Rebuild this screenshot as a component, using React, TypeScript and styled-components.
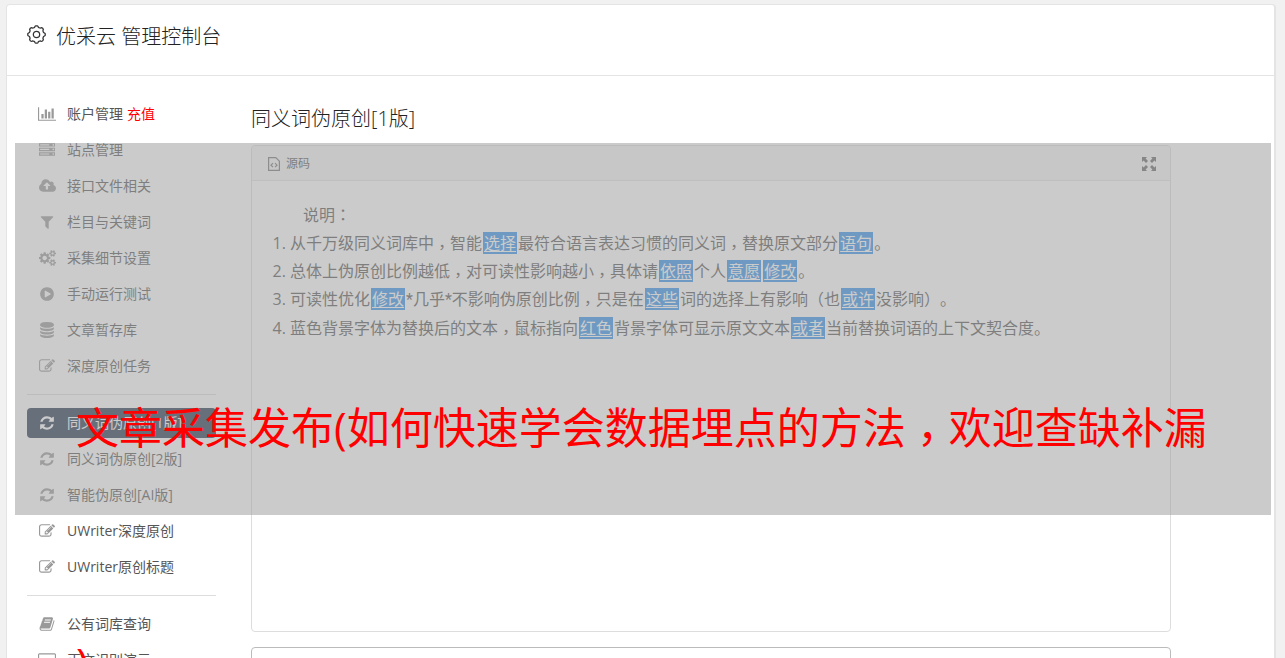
import React from 'react';
import styled, { createGlobalStyle } from 'styled-components';

const Global = createGlobalStyle`
  * { box-sizing: border-box; }
  html, body, #root { height: 100%; }
  body {
    margin: 0;
    overflow: hidden;
    background: #f1f1f1;
    color: #222;
    font-family: "Open Sans", "Noto Sans CJK SC", sans-serif;
    font-size: 14px;
    font-weight: 400;
    text-spacing-trim: space-all;
  }
`;

const Page = styled.div`
  position: relative;
  height: 100%;
  overflow: hidden;
  padding: 4px 9px 0 6px;
`;

const Shell = styled.div`
  min-height: 100%;
  background: #fff;
  border: 1px solid #e4e4e4;
  border-right-width: 2px;
  border-radius: 4px 4px 0 0;
`;

const Header = styled.header`
  display: flex;
  align-items: center;
  gap: 10px;
  height: 71px;
  padding: 0 20px 12px;
  border-bottom: 1px solid #e4e4e4;
`;

const Brand = styled.h1`
  margin: 0;
  padding-top: 5px;
  font-size: 20px;
  line-height: 28px;
  font-weight: 300;
`;

const Columns = styled.div`
  display: flex;
  align-items: flex-start;
  gap: 35px;
  padding: 23px 103px 0 20px;
`;

const Side = styled.nav`
  flex: 0 0 189px;
`;

const MenuList = styled.ul`
  display: flex;
  flex-direction: column;
  gap: 6px;
  list-style: none;
  margin: 0;
  padding: 0;
`;

const Divider = styled.hr`
  width: 100%;
  height: 1px;
  margin: 13px 0;
  border: 0;
  background: #ddd;
`;

const MenuLink = styled.a<{ $active?: boolean }>`
  display: flex;
  align-items: center;
  gap: 10px;
  height: 30px;
  padding: 0 10px;
  border-radius: 4px;
  white-space: nowrap;
  text-decoration: none;
  color: ${p => (p.$active ? '#fff' : '#555')};
  background: ${p => (p.$active ? '#23344f' : 'transparent')};
  svg { color: ${p => (p.$active ? '#fff' : '#999')}; }
`;

const IconSlot = styled.span`
  display: flex;
  justify-content: center;
  flex: 0 0 20px;
`;

const MenuLabel = styled.span`
  padding-bottom: 2px;
`;

const Recharge = styled.span`
  margin-left: 4px;
  color: #f00;
`;

const Main = styled.main`
  flex: 1;
  min-width: 0;
`;

const Title = styled.h2`
  margin: 6px 0 12px;
  font-size: 20px;
  line-height: 28px;
  font-weight: 300;
`;

const Panel = styled.section`
  height: 487px;
  border: 1px solid #ddd;
  border-radius: 4px;
  overflow: hidden;
`;

const Toolbar = styled.div`
  display: flex;
  align-items: center;
  justify-content: space-between;
  height: 35px;
  padding: 2px 14px 0 16px;
  background: #f5f5f5;
  border-bottom: 1px solid #e4e4e4;
`;

const ToolButton = styled.button`
  display: flex;
  align-items: center;
  gap: 6px;
  padding: 0;
  border: 0;
  background: none;
  color: #555;
  font-family: inherit;
  font-size: 12px;
  line-height: 16px;
`;

const Article = styled.div`
  padding: 20px 19px;
  font-size: 16px;
  line-height: 28px;
  color: #555;
  white-space: nowrap;
`;

const Lead = styled.p`
  margin: 0;
  padding-left: 32px;
`;

const Rules = styled.ol`
  margin: 0;
  padding-left: 19px;
`;

const Swap = styled.a`
  margin: 0 1px;
  padding: 0 1px;
  color: #fff;
  background: #3291eb;
  text-decoration: underline;
  text-underline-offset: 2px;
`;

/* Full-width punctuation centred in its cell; commas drop to the baseline */
const Mark = styled.span<{ $low?: boolean }>`
  font-family: "Noto Sans CJK TC", sans-serif;
  line-height: 0;
  vertical-align: ${p => (p.$low ? '-0.25em' : 'baseline')};
`;

const Star = styled.span`
  font-family: Roboto, sans-serif;
`;

const NextPanel = styled.section`
  height: 60px;
  margin-top: 15px;
  border: 1px solid #bbb;
  border-radius: 4px;
`;

const Veil = styled.div`
  position: absolute;
  top: 143px;
  left: 15px;
  right: 14px;
  height: 372px;
  background: rgba(160, 160, 160, 0.55);
`;

const Caption = styled.p`
  position: absolute;
  top: 310px;
  left: 76px;
  right: 70px;
  margin: 0;
  font-size: 43px;
  line-height: 236px;
  color: #f00;
  line-break: anywhere;
`;

type Glyph = { w: number; d: string };

const glyphs: Record<string, Glyph> = {
  chart: { w: 2048, d: 'M640 896v512h-256v-512h256zm384-512v1024h-256v-1024h256zm1024 1152v128h-2048v-1536h128v1408h1920zm-640-896v768h-256v-768h256zm384-384v1152h-256v-1152h256z' },
  server: { w: 1792, d: 'M128 1408h1024v-128h-1024v128zm0-512h1024v-128h-1024v128zm1568 448q0-40-28-68t-68-28-68 28-28 68 28 68 68 28 68-28 28-68zm-1568-960h1024v-128h-1024v128zm1568 448q0-40-28-68t-68-28-68 28-28 68 28 68 68 28 68-28 28-68zm0-512q0-40-28-68t-68-28-68 28-28 68 28 68 68 28 68-28 28-68zm96 832v384h-1792v-384h1792zm0-512v384h-1792v-384h1792zm0-512v384h-1792v-384h1792z' },
  cloud: { w: 1920, d: 'M1280 864q0-14-9-23l-352-352q-9-9-23-9t-23 9l-351 351q-10 12-10 24 0 14 9 23t23 9h224v352q0 13 9.5 22.5t22.5 9.5h192q13 0 22.5-9.5t9.5-22.5v-352h224q13 0 22.5-9.5t9.5-22.5zm640 288q0 159-112.5 271.5t-271.5 112.5h-1088q-185 0-316.5-131.5t-131.5-316.5q0-130 70-240t188-165q-2-30-2-43 0-212 150-362t362-150q156 0 285.5 87t188.5 231q71-62 166-62 106 0 181 75t75 181q0 76-41 138 130 31 213.5 135.5t83.5 238.5z' },
  filter: { w: 1792, d: 'M1595 295q17 41-14 70l-493 493v742q0 42-39 59-13 5-25 5-27 0-45-19l-256-256q-19-19-19-45v-486l-493-493q-31-29-14-70 17-39 59-39h1280q42 0 59 39z' },
  cogs: { w: 1920, d: 'M896 896q0-106-75-181t-181-75-181 75-75 181 75 181 181 75 181-75 75-181zm768 512q0-52-38-90t-90-38-90 38-38 90q0 53 37.5 90.5t90.5 37.5 90.5-37.5 37.5-90.5zm0-1024q0-52-38-90t-90-38-90 38-38 90q0 53 37.5 90.5t90.5 37.5 90.5-37.5 37.5-90.5zm-384 421v185q0 10-7 19.5t-16 10.5l-155 24q-11 35-32 76 34 48 90 115 7 11 7 20 0 12-7 19-23 30-82.5 89.5t-78.5 59.5q-11 0-21-7l-115-90q-37 19-77 31-11 108-23 155-7 24-30 24h-186q-11 0-20-7.5t-10-17.5l-23-153q-34-10-75-31l-118 89q-7 7-20 7-11 0-21-8-144-133-144-160 0-9 7-19 10-14 41-53t47-61q-23-44-35-82l-152-24q-10-1-17-9.5t-7-19.5v-185q0-10 7-19.5t16-10.5l155-24q11-35 32-76-34-48-90-115-7-11-7-20 0-12 7-20 22-30 82-89t79-59q11 0 21 7l115 90q34-18 77-32 11-108 23-154 7-24 30-24h186q11 0 20 7.5t10 17.5l23 153q34 10 75 31l118-89q8-7 20-7 11 0 21 8 144 133 144 160 0 8-7 19-12 16-42 54t-45 60q23 48 34 82l152 23q10 2 17 10.5t7 19.5zm640 533v140q0 16-149 31-12 27-30 52 51 113 51 138 0 4-4 7-122 71-124 71-8 0-46-47t-52-68q-20 2-30 2t-30-2q-14 21-52 68t-46 47q-2 0-124-71-4-3-4-7 0-25 51-138-18-25-30-52-149-15-149-31v-140q0-16 149-31 13-29 30-52-51-113-51-138 0-4 4-7 4-2 35-20t59-34 30-16q8 0 46 46.5t52 67.5q20-2 30-2t30 2q51-71 92-112l6-2q4 0 124 70 4 3 4 7 0 25-51 138 17 23 30 52 149 15 149 31zm0-1024v140q0 16-149 31-12 27-30 52 51 113 51 138 0 4-4 7-122 71-124 71-8 0-46-47t-52-68q-20 2-30 2t-30-2q-14 21-52 68t-46 47q-2 0-124-71-4-3-4-7 0-25 51-138-18-25-30-52-149-15-149-31v-140q0-16 149-31 13-29 30-52-51-113-51-138 0-4 4-7 4-2 35-20t59-34 30-16q8 0 46 46.5t52 67.5q20-2 30-2t30 2q51-71 92-112l6-2q4 0 124 70 4 3 4 7 0 25-51 138 17 23 30 52 149 15 149 31z' },
  play: { w: 1792, d: 'M896 128q209 0 385.5 103t279.5 279.5 103 385.5-103 385.5-279.5 279.5-385.5 103-385.5-103-279.5-279.5-103-385.5 103-385.5 279.5-279.5 385.5-103zm384 823q32-18 32-55t-32-55l-544-320q-31-19-64-1-32 19-32 56v640q0 37 32 56 16 8 32 8 17 0 32-9z' },
  database: { w: 1792, d: 'M896 768q237 0 443-43t325-127v170q0 69-103 128t-280 93.5-385 34.5-385-34.5-280-93.5-103-128v-170q119 84 325 127t443 43zm0 768q237 0 443-43t325-127v170q0 69-103 128t-280 93.5-385 34.5-385-34.5-280-93.5-103-128v-170q119 84 325 127t443 43zm0-384q237 0 443-43t325-127v170q0 69-103 128t-280 93.5-385 34.5-385-34.5-280-93.5-103-128v-170q119 84 325 127t443 43zm0-1152q208 0 385 34.5t280 93.5 103 128v128q0 69-103 128t-280 93.5-385 34.5-385-34.5-280-93.5-103-128v-128q0-69 103-128t280-93.5 385-34.5z' },
  edit: { w: 1792, d: 'M888 1184l116-116-152-152-116 116v56h96v96h56zm440-720q-16-16-33 1l-350 350q-17 17-1 33t33-1l350-350q17-17 1-33zm80 594v190q0 119-84.5 203.5t-203.5 84.5h-832q-119 0-203.5-84.5t-84.5-203.5v-832q0-119 84.5-203.5t203.5-84.5h832q63 0 117 25 15 7 18 23 3 17-9 29l-49 49q-14 14-32 8-23-6-45-6h-832q-66 0-113 47t-47 113v832q0 66 47 113t113 47h832q66 0 113-47t47-113v-126q0-13 9-22l64-64q15-15 35-7t20 29zm-96-738l288 288-672 672h-288v-288zm444 132l-92 92-288-288 92-92q28-28 68-28t68 28l152 152q28 28 28 68t-28 68z' },
  refresh: { w: 1792, d: 'M1639 1056q0 5-1 7-64 268-268 434.5t-478 166.5q-146 0-282.5-55t-243.5-157l-129 129q-19 19-45 19t-45-19-19-45v-448q0-26 19-45t45-19h448q26 0 45 19t19 45-19 45l-137 137q71 66 161 102t187 36q134 0 250-65t186-179q11-17 53-117 8-23 30-23h192q13 0 22.5 9.5t9.5 22.5zm25-800v448q0 26-19 45t-45 19h-448q-26 0-45-19t-19-45 19-45l138-138q-148-137-349-137-134 0-250 65t-186 179q-11 17-53 117-8 23-30 23h-199q-13 0-22.5-9.5t-9.5-22.5v-7q65-268 270-434.5t480-166.5q146 0 284 55.5t245 156.5l130-129q19-19 45-19t45 19 19 45z' },
  book: { w: 1792, d: 'M1703 478q40 57 18 129l-275 906q-19 64-76.5 107.5t-122.5 43.5h-923q-77 0-148.5-53.5t-99.5-131.5q-24-67-2-127 0-4 3-27t4-37q1-8-3-21.5t-3-19.5q2-11 8-21t16.5-23.5 16.5-23.5q23-38 45-91.5t30-91.5q3-10 .5-30t-.5-28q3-11 17-28t17-23q21-36 42-92t25-90q1-9-2.5-32t.5-28q4-13 22-30.5t22-22.5q19-26 42.5-84.5t27.5-96.5q1-8-3-25.5t-2-26.5q2-8 9-18t18-23 17-21q8-12 16.5-30.5t15-35 16-36 19.5-32 26.5-23.5 36-11.5 47.5 5.5l-1 3q38-9 51-9h761q74 0 114 56t18 130l-274 906q-36 119-71.5 153.5t-128.5 34.5h-869q-27 0-38 15-11 16-1 43 24 70 144 70h923q29 0 56-15.5t35-41.5l300-987q7-22 5-57 38 15 59 43zm-1064 2q-4 13 2 22.5t20 9.5h608q13 0 25.5-9.5t16.5-22.5l21-64q4-13-2-22.5t-20-9.5h-608q-13 0-25.5 9.5t-16.5 22.5zm-83 256q-4 13 2 22.5t20 9.5h608q13 0 25.5-9.5t16.5-22.5l21-64q4-13-2-22.5t-20-9.5h-608q-13 0-25.5 9.5t-16.5 22.5z' },
  screen: { w: 2048, d: 'M1888 128q66 0 113 47t47 113v1088q0 66-47 113t-113 47h-1728q-66 0-113-47t-47-113v-1088q0-66 47-113t113-47h1728zm32 1248v-1088q0-13-9.5-22.5t-22.5-9.5h-1728q-13 0-22.5 9.5t-9.5 22.5v1088q0 13 9.5 22.5t22.5 9.5h1728q13 0 22.5-9.5t9.5-22.5z' },
};

function MenuIcon({ name }: { name: string }) {
  const g = glyphs[name];
  return (
    <svg width={Math.round(g.w / 112)} height={16} viewBox={`0 0 ${g.w} 1792`} fill="currentColor" aria-hidden="true">
      <path d={g.d} />
    </svg>
  );
}

function GearIcon() {
  const points: string[] = [];
  for (let i = 0; i <= 96; i++) {
    const a = (i / 96) * Math.PI * 2;
    const r = 7.6 + 0.7 * Math.tanh(2.2 * Math.cos(8 * a));
    points.push(`${(9 + r * Math.sin(a)).toFixed(2)} ${(9 - r * Math.cos(a)).toFixed(2)}`);
  }
  return (
    <svg width="19" height="19" viewBox="0 0 18 18" fill="none" stroke="#333" strokeWidth="1.2" aria-hidden="true">
      <path d={`M${points.join('L')}Z`} />
      <circle cx="9" cy="9" r="3" />
    </svg>
  );
}

function SourceIcon() {
  return (
    <svg width="12" height="14" viewBox="0 0 12 14" fill="none" stroke="#777" aria-hidden="true">
      <path d="M.6.6h7.2l3.6 3.6v9.2H.6z" strokeWidth="1.2" />
      <path d="M5 6.2 3 8.2l2 2M7 6.2l2 2-2 2" strokeWidth="1.2" />
    </svg>
  );
}

function ExpandIcon() {
  const arrow = 'M0 0h5L3.600 1.600 6 4 4 6 1.600 3.600 0 5z';
  return (
    <svg width="14" height="14" viewBox="0 0 14 14" fill="#666" aria-hidden="true">
      {[0, 90, 180, 270].map(turn => (
        <path key={turn} d={arrow} transform={`rotate(${turn} 7 7)`} />
      ))}
    </svg>
  );
}

type Item = { icon: string; label: string; extra?: string; active?: boolean };

const groups: Item[][] = [
  [
    { icon: 'chart', label: '账户管理', extra: '充值' },
    { icon: 'server', label: '站点管理' },
    { icon: 'cloud', label: '接口文件相关' },
    { icon: 'filter', label: '栏目与关键词' },
    { icon: 'cogs', label: '采集细节设置' },
    { icon: 'play', label: '手动运行测试' },
    { icon: 'database', label: '文章暂存库' },
    { icon: 'edit', label: '深度原创任务' },
  ],
  [
    { icon: 'refresh', label: '同义词伪原创[1版]', active: true },
    { icon: 'refresh', label: '同义词伪原创[2版]' },
    { icon: 'refresh', label: '智能伪原创[AI版]' },
    { icon: 'edit', label: 'UWriter深度原创' },
    { icon: 'edit', label: 'UWriter原创标题' },
  ],
  [
    { icon: 'book', label: '公有词库查询' },
    { icon: 'screen', label: '正文识别演示' },
  ],
];

/* {词} marks a replaced word */
const rules = [
  '从千万级同义词库中，智能{选择}最符合语言表达习惯的同义词，替换原文部分{语句}。',
  '总体上伪原创比例越低，对可读性影响越小，具体请{依照}个人{意愿}{修改}。',
  '可读性优化{修改}*几乎*不影响伪原创比例，只是在{这些}词的选择上有影响（也{或许}没影响）。',
  '蓝色背景字体为替换后的文本，鼠标指向{红色}背景字体可显示原文文本{或者}当前替换词语的上下文契合度。',
];

function RichText({ text }: { text: string }) {
  return (
    <>
      {text.split(/(\{.+?\}|[，：*])/).map((part, i) => {
        if (part.startsWith('{')) return <Swap href="#" key={i}>{part.slice(1, -1)}</Swap>;
        if (part === '，' || part === '：') {
          return <Mark lang="zh-Hant" $low={part === '，'} key={i}>{part}</Mark>;
        }
        if (part === '*') return <Star key={i}>*</Star>;
        return part;
      })}
    </>
  );
}

export default function App() {
  return (
    <Page>
      <Global />
      <Shell>
        <Header>
          <GearIcon />
          <Brand>优采云 管理控制台</Brand>
        </Header>
        <Columns>
          <Side>
            {groups.map((items, gi) => (
              <React.Fragment key={gi}>
                {gi > 0 && <Divider />}
                <MenuList>
                  {items.map(item => (
                    <li key={item.label}>
                      <MenuLink href="#" $active={item.active}>
                        <IconSlot><MenuIcon name={item.icon} /></IconSlot>
                        <MenuLabel>
                          {item.label}
                          {item.extra && <Recharge>{item.extra}</Recharge>}
                        </MenuLabel>
                      </MenuLink>
                    </li>
                  ))}
                </MenuList>
              </React.Fragment>
            ))}
          </Side>
          <Main>
            <Title>同义词伪原创[1版]</Title>
            <Panel>
              <Toolbar>
                <ToolButton type="button"><SourceIcon />源码</ToolButton>
                <ToolButton type="button" aria-label="全屏"><ExpandIcon /></ToolButton>
              </Toolbar>
              <Article>
                <Lead><RichText text="说明：" /></Lead>
                <Rules>
                  {rules.map(rule => <li key={rule}><RichText text={rule} /></li>)}
                </Rules>
              </Article>
            </Panel>
            <NextPanel />
          </Main>
        </Columns>
      </Shell>
      <Veil />
      <Caption><RichText text="文章采集发布(如何快速学会数据埋点的方法，欢迎查缺补漏)" /></Caption>
    </Page>
  );
}
